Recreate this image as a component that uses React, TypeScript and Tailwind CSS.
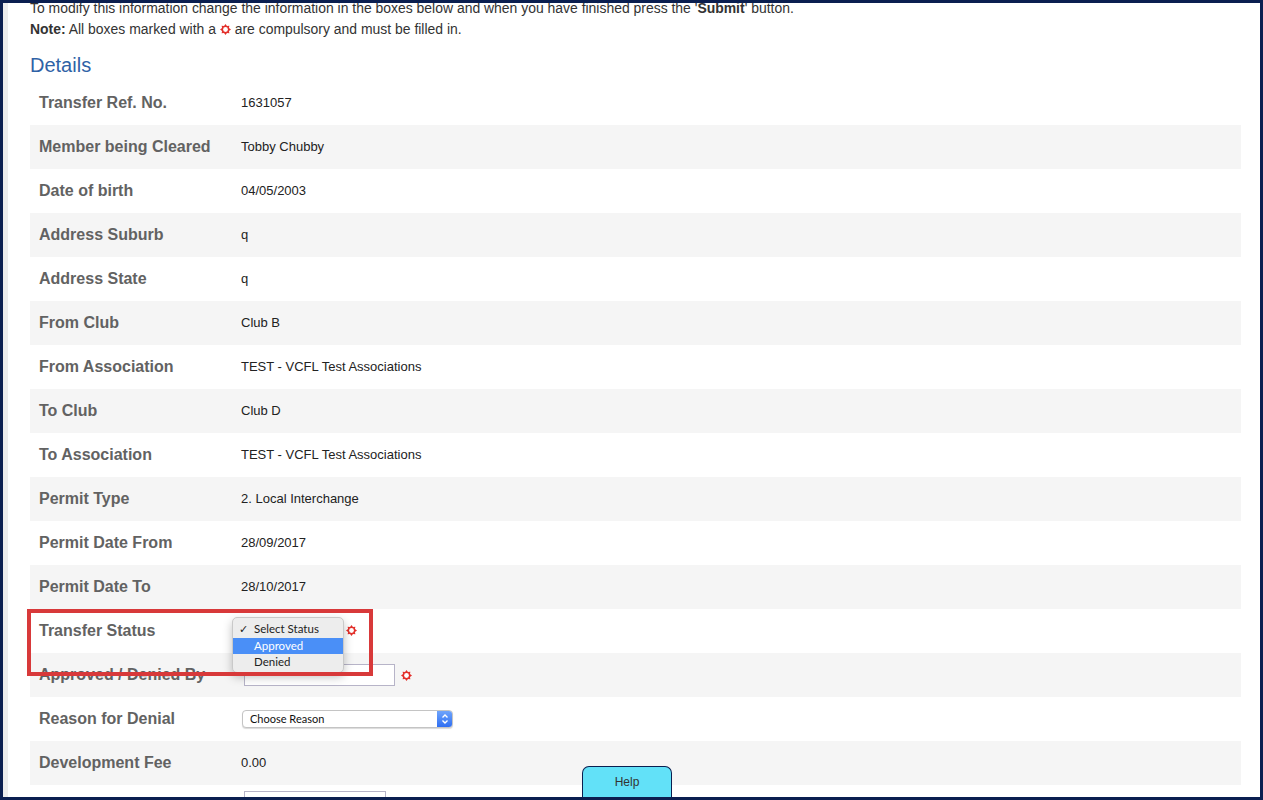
import React from 'react';

interface Row {
  label: string;
  value?: string;
  kind?: 'text' | 'status' | 'input' | 'select' | 'blank';
}

const rows: Row[] = [
  { label: 'Transfer Ref. No.', value: '1631057' },
  { label: 'Member being Cleared', value: 'Tobby Chubby' },
  { label: 'Date of birth', value: '04/05/2003' },
  { label: 'Address Suburb', value: 'q' },
  { label: 'Address State', value: 'q' },
  { label: 'From Club', value: 'Club B' },
  { label: 'From Association', value: 'TEST - VCFL Test Associations' },
  { label: 'To Club', value: 'Club D' },
  { label: 'To Association', value: 'TEST - VCFL Test Associations' },
  { label: 'Permit Type', value: '2. Local Interchange' },
  { label: 'Permit Date From', value: '28/09/2017' },
  { label: 'Permit Date To', value: '28/10/2017' },
  { label: 'Transfer Status', kind: 'status' },
  { label: 'Approved / Denied By', kind: 'input' },
  { label: 'Reason for Denial', kind: 'select' },
  { label: 'Development Fee', value: '0.00' },
  { label: '', kind: 'blank' },
];

const Required = () => (
  <svg width="11" height="11" viewBox="0 0 12 12" className="inline-block align-[-1px]">
    <polygon
      points="6,0 7.6,2.2 10.2,1.8 9.8,4.4 12,6 9.8,7.6 10.2,10.2 7.6,9.8 6,12 4.4,9.8 1.8,10.2 2.2,7.6 0,6 2.2,4.4 1.8,1.8 4.4,2.2"
      fill="#e3302b"
    />
    <circle cx="6" cy="6" r="2.6" fill="#fff" />
  </svg>
);

const ReasonSelect = () => (
  <div className="flex h-[18px] w-[211px] items-stretch overflow-hidden rounded-[4px] border border-[#c4c4c4] bg-white shadow-[0_1px_1px_rgba(0,0,0,0.15)]">
    <span className="flex flex-1 items-center pl-[7px] text-[11px] text-[#111]" style={{ fontFamily: 'Lato, "Liberation Sans", sans-serif' }}>
      Choose Reason
    </span>
    <span className="flex w-[15px] items-center justify-center bg-gradient-to-b from-[#6fa4fb] to-[#2f6ef2]">
      <svg width="8" height="12" viewBox="0 0 8 12" fill="none" stroke="#fff" strokeWidth="1.4">
        <polyline points="1.5,4.5 4,2 6.5,4.5" />
        <polyline points="1.5,7.5 4,10 6.5,7.5" />
      </svg>
    </span>
  </div>
);

export default function App() {
  return (
    <div className="flex h-[800px] w-full bg-[#0b1f50] p-[3px]" style={{ fontFamily: '"Liberation Sans", Arial, sans-serif' }}>
      <div className="relative flex flex-1 overflow-hidden bg-white">
        <div className="w-[5px] shrink-0 bg-[#ececec]" />
        <div className="relative flex-1 pl-[22px] pr-[19px]">
          <p className="-mt-[5px] whitespace-nowrap text-[13.95px] leading-[20px] text-[#333]">
            To modify this information change the information in the boxes below and when you have finished press the '<b>Submit</b>' button.
          </p>
          <p className="whitespace-nowrap text-[13.95px] leading-[22px] text-[#333]">
            <b>Note:</b> All boxes marked with a <Required /> are compulsory and must be filled in.
          </p>
          <h2 className="mt-[12px] text-[20px] leading-[26px] text-[#2f62a6]">Details</h2>
          <div className="mt-[3px]">
            {rows.map((r, i) => (
              <div
                key={i}
                className={`flex h-[44px] items-center ${i % 2 === 1 ? 'bg-[#f5f5f5]' : 'bg-white'}`}
              >
                <div className="w-[211px] shrink-0 pl-[9px] text-[16px] font-bold text-[#626262]">{r.label}</div>
                {r.value !== undefined && (
                  <div className="text-[13px] text-[#222]">{r.value}</div>
                )}
                {r.kind === 'status' && (
                  <div className="relative h-full w-full">
                    <div className="absolute left-[105px] top-[16px] flex">
                      <Required />
                    </div>
                  </div>
                )}
                {r.kind === 'input' && (
                  <div className="flex items-center">
                    <div className="ml-[3px] h-[22px] w-[151px] border border-[#b7b4c8] bg-white" />
                    <span className="ml-[6px] flex">
                      <Required />
                    </span>
                  </div>
                )}
                {r.kind === 'select' && (
                  <div className="ml-[1px]">
                    <ReasonSelect />
                  </div>
                )}
                {r.kind === 'blank' && (
                  <div className="ml-[3px] mt-[6px] h-[22px] w-[142px] self-start border border-[#b7b4c8] bg-white" />
                )}
              </div>
            ))}
          </div>

          {/* open status dropdown */}
          <div
            className="absolute left-[224px] top-[614px] w-[112px] rounded-[5px] border border-[#c9c9c9] bg-[#ededed] py-[2px] text-[11.5px] text-[#222] shadow-[0_4px_10px_rgba(0,0,0,0.25)]"
            style={{ fontFamily: 'Lato, "Liberation Sans", sans-serif' }}
          >
            <div className="flex h-[18px] items-center">
              <span className="w-[21px] pl-[6px] text-[11px]">✓</span>
              <span>Select Status</span>
            </div>
            <div className="flex h-[16px] items-center bg-[#4a8ff7] text-white">
              <span className="w-[21px]" />
              <span>Approved</span>
            </div>
            <div className="flex h-[16px] items-center">
              <span className="w-[21px]" />
              <span>Denied</span>
            </div>
          </div>

          {/* highlight box */}
          <div className="pointer-events-none absolute left-[19px] top-[606px] h-[67px] w-[346px] border-[4px] border-[#d8393a]" />
        </div>

        <button className="absolute bottom-0 left-[579px] h-[31px] w-[90px] rounded-t-[7px] border border-b-0 border-[#0b1f50] bg-[#62e1f8] text-[12px] text-[#333]">
          Help
        </button>
      </div>
    </div>
  );
}
